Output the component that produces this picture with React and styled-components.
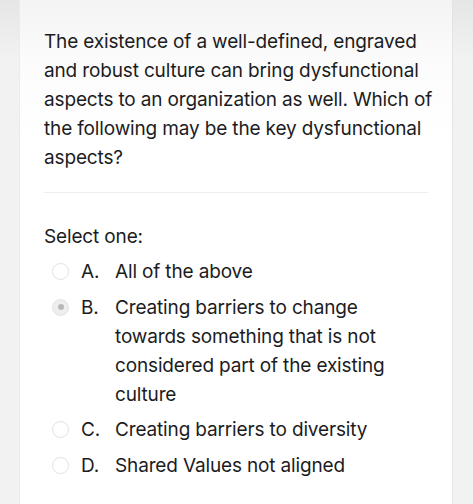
import React from "react";
import styled, { createGlobalStyle } from "styled-components";

const Global = createGlobalStyle`
  html, body { margin: 0; padding: 0; background: #f2f2f2; }
  body { font-family: Inter, "Noto Sans", sans-serif; color: #1c1c1e; }
`;

const Page = styled.div`
  width: 473px;
  height: 504px;
  display: flex;
  justify-content: center;
  background: linear-gradient(to bottom, #e6e6e6 0px, #f2f2f2 60px);
  overflow: hidden;
`;

const Card = styled.div`
  width: 434px;
  margin-left: -1px;
  background: linear-gradient(to bottom, #f4f4f4 0px, #fcfcfc 70px, #ffffff 140px);
  border-left: 1px solid #ececec;
  border-right: 1px solid #e4e4e4;
  padding: 27px 24px 0 24px;
  box-sizing: border-box;
`;

const Question = styled.p`
  margin: 0 -8px 0 0;
  font-size: 19px;
  line-height: 29px;
  letter-spacing: -0.15px;
`;

const Divider = styled.hr`
  margin: 20px 0 0 0;
  border: none;
  border-top: 1.5px solid #eeeeee;
`;

const Prompt = styled.div`
  margin-top: 29px;
  font-size: 19px;
  line-height: 29px;
  letter-spacing: -0.15px;
`;

const Options = styled.div`
  display: flex;
  flex-direction: column;
  gap: 6.5px;
  margin-top: 6px;
  padding-left: 9px;
`;

const Option = styled.label`
  display: grid;
  grid-template-columns: 28px 34px 1fr;
  align-items: start;
  font-size: 19px;
  line-height: 29px;
  letter-spacing: -0.15px;
`;

const Radio = styled.span`
  width: 17px;
  height: 17px;
  margin-top: 6px;
  margin-left: -1px;
  border-radius: 50%;
  border: 1.5px solid #e2e2e2;
  box-sizing: border-box;
  display: flex;
  align-items: center;
  justify-content: center;
  background: ${(p) => (p.$checked ? "#eeeeee" : "#ffffff")};
  &::after {
    content: "";
    width: 6px;
    height: 6px;
    border-radius: 50%;
    background: ${(p) => (p.$checked ? "#b8b8b8" : "transparent")};
  }
`;

const Letter = styled.span``;
const Text = styled.span`
  max-width: 290px;
`;

const options = [
  { l: "A.", t: "All of the above" },
  { l: "B.", t: "Creating barriers to change towards something that is not considered part of the existing culture", checked: true },
  { l: "C.", t: "Creating barriers to diversity" },
  { l: "D.", t: "Shared Values not aligned" },
];

export default function App() {
  return (
    <>
      <Global />
      <Page>
        <Card>
          <Question>
            The existence of a well-defined, engraved and robust culture can bring dysfunctional aspects to an organization as well. Which of the following may be the key dysfunctional aspects?
          </Question>
          <Divider />
          <Prompt>Select one:</Prompt>
          <Options>
            {options.map((o) => (
              <Option key={o.l}>
                <Radio $checked={o.checked} />
                <Letter>{o.l}</Letter>
                <Text>{o.t}</Text>
              </Option>
            ))}
          </Options>
        </Card>
      </Page>
    </>
  );
}
